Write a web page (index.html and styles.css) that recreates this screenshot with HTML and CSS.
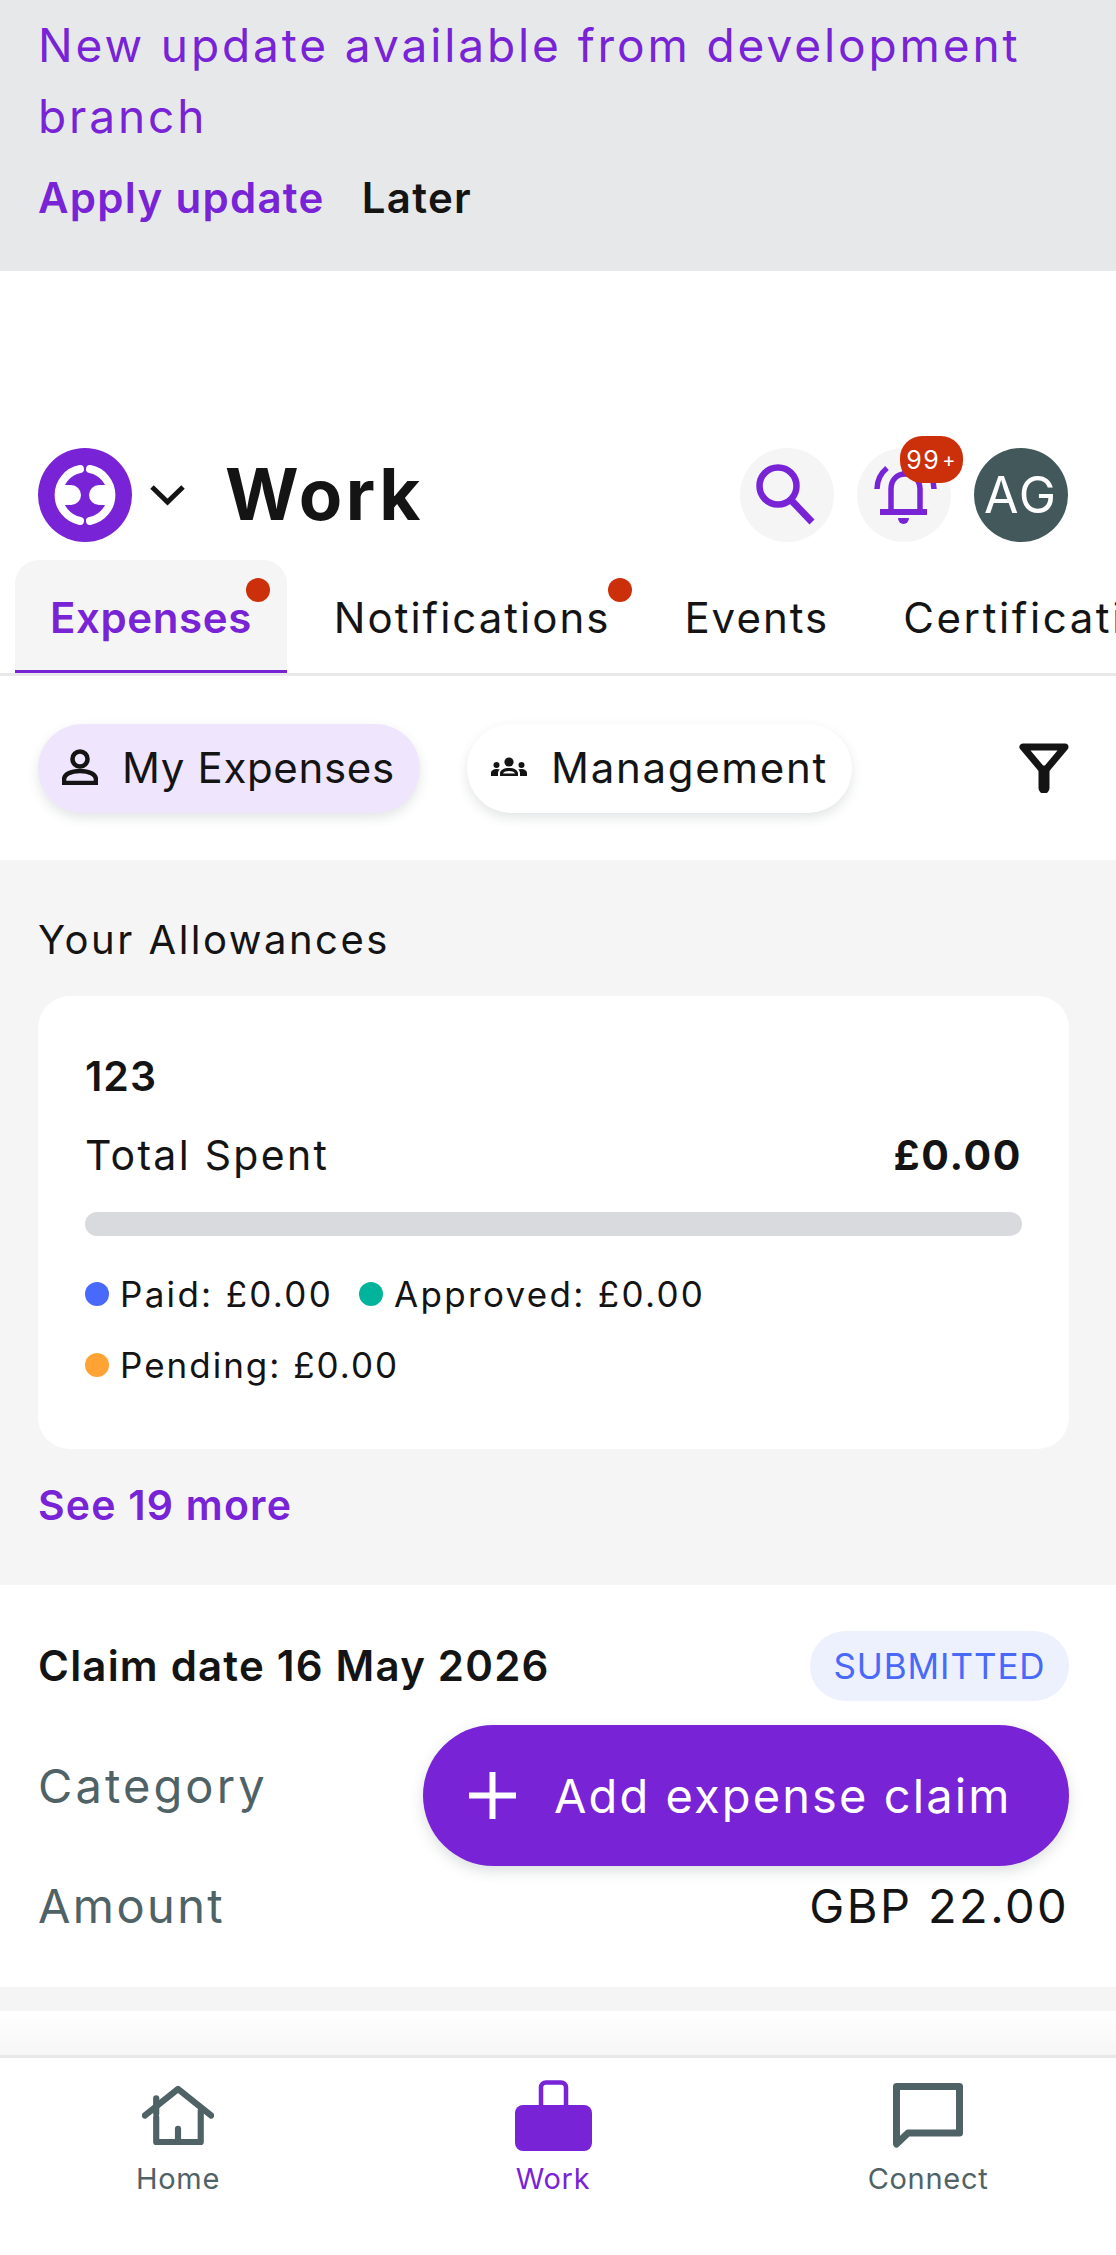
FILE: index.html
```html
<!DOCTYPE html>
<html lang="en">
<head>
<meta charset="utf-8">
<title>Work</title>
<link rel="stylesheet" href="styles.css">
</head>
<body>
<div class="app">
  <section class="banner">
    <p class="banner-text">New update available from development branch</p>
    <div class="banner-actions"><span class="apply">Apply update</span><span class="later">Later</span></div>
  </section>

  <header class="header">
    <svg class="logo" viewBox="0 0 94 94">
      <circle cx="47" cy="47" r="47" fill="#7823d6"/>
      <g fill="none" stroke="#fff" stroke-linecap="round" stroke-width="8">
        <path d="M42 21A26.500 26.500 0 0 0 42 73"/>
        <path d="M52 21A26.500 26.500 0 0 1 52 73"/>
      </g>
      <path d="M20 37H33a10 10 0 0 1 0 20H20Z" fill="#fff"/>
      <path d="M74 37H61a10 10 0 0 0 0 20H74Z" fill="#fff"/>
    </svg>
    <svg class="chevron" viewBox="0 0 35 22"><path d="M2 3L17.500 18L33 3" fill="none" stroke="#141414" stroke-width="5"/></svg>
    <h1 class="title">Work</h1>
    <div class="header-actions">
      <div class="round grey">
        <svg viewBox="0 0 94 94" class="round-icon"><circle cx="38" cy="38" r="18.500" fill="none" stroke="#7823d6" stroke-width="6.500"/><path d="M51 52L72 74" stroke="#7823d6" stroke-width="7" fill="none"/></svg>
      </div>
      <div class="round grey">
        <svg viewBox="0 0 94 94" class="round-icon">
          <g fill="none" stroke="#7823d6" stroke-width="5.500">
            <path d="M34 62V41C34 32 40 26 48 26S63 32 63 41V62"/>
            <path d="M48 27V18"/>
            <path d="M30 20C24 25 20 32 20 41"/>
            <path d="M67 20C73 25 77 32 77 41"/>
          </g>
          <rect x="23" y="61" width="47" height="6" fill="#7823d6"/>
          <path d="M41 70H52A5.500 6 0 0 1 41 70Z" fill="#7823d6"/>
        </svg>
        <span class="count">99<small class="count-plus">+</small></span>
      </div>
      <div class="round avatar">AG</div>
    </div>
  </header>

  <nav class="tabs">
    <div class="tab active">Expenses<span class="dot"></span></div>
    <div class="tab">Notifications<span class="dot"></span></div>
    <div class="tab">Events</div>
    <div class="tab">Certifications</div>
  </nav>

  <div class="filters">
    <div class="chip chip-on">
      <svg class="chip-icon" viewBox="0 0 36 36"><circle cx="18" cy="10" r="7.500" fill="none" stroke="#141414" stroke-width="4.500"/><path d="M2 34V31C2 25 9 22 18 22S34 25 34 31V34Z" fill="none" stroke="#141414" stroke-width="4.500"/></svg>
      <span>My Expenses</span>
    </div>
    <div class="chip chip-off">
      <svg class="chip-icon" viewBox="0 0 36 36">
        <g fill="#141414">
          <circle cx="18" cy="13" r="4.600"/><circle cx="5.500" cy="16" r="3"/><circle cx="30.500" cy="16" r="3"/>
          <path d="M0 27V24C0 21.500 3 20 6 20C7 20 8 20.200 8.800 20.500C7.600 21.600 7 22.900 7 24.300V27Z"/>
          <path d="M36 27V24C36 21.500 33 20 30 20C29 20 28 20.200 27.200 20.500C28.400 21.600 29 22.900 29 24.300V27Z"/>
          <path d="M9 27V24.500C9 21 13 19 18 19S27 21 27 24.500V27ZM12 24.500H24C23 22.700 21 22 18 22S13 22.700 12 24.500Z" fill-rule="evenodd"/>
        </g>
      </svg>
      <span>Management</span>
    </div>
    <svg class="filter" viewBox="0 0 50 50"><path d="M4 4H46L25 29Z" fill="none" stroke="#141414" stroke-width="7" stroke-linejoin="round"/><path d="M25 28V45" stroke="#141414" stroke-width="11" stroke-linecap="round"/></svg>
  </div>

  <main class="content">
    <section class="allowances">
      <h2 class="section-title">Your Allowances</h2>
      <div class="card">
        <div class="card-name">123</div>
        <div class="spent"><span>Total Spent</span><strong>£0.00</strong></div>
        <div class="bar"></div>
        <div class="legend">
          <span class="item"><i class="swatch blue"></i>Paid: £0.00</span>
          <span class="item"><i class="swatch green"></i>Approved: £0.00</span>
          <span class="item"><i class="swatch orange"></i>Pending: £0.00</span>
        </div>
      </div>
      <a class="more">See 19 more</a>
    </section>

    <section class="claim">
      <div class="claim-head"><strong>Claim date 16 May 2026</strong><span class="status">SUBMITTED</span></div>
      <div class="row"><span class="label">Category</span></div>
      <div class="row"><span class="label">Amount</span><span class="value">GBP 22.00</span></div>
    </section>
    <div class="divider"></div>
    <div class="next"></div>
  </main>

  <button class="fab">
    <svg class="plus" viewBox="0 0 47 47"><path d="M23.500 0V47M0 23.500H47" stroke="#fff" stroke-width="6"/></svg>
    <span>Add expense claim</span>
  </button>

  <footer class="bottom">
    <div class="nav-item nav-home">
      <div class="nav-icon">
        <svg class="i-home" viewBox="0 0 76 64"><g fill="none" stroke="#4f6266" stroke-width="6.500" stroke-linecap="round" stroke-linejoin="round"><path d="M3 32L38 4L73 32"/><path d="M15 34V60H62V27"/><path d="M15 14V30"/><path d="M38 46V60"/></g></svg>
      </div>
      <span class="nav-label">Home</span>
    </div>
    <div class="nav-item nav-on">
      <div class="nav-icon">
        <svg class="i-work" viewBox="0 0 77 71"><rect x="26" y="2.500" width="25" height="30" rx="5" fill="none" stroke="#7823d6" stroke-width="4.500"/><rect x="0" y="25" width="77" height="46" rx="8" fill="#7823d6"/></svg>
      </div>
      <span class="nav-label">Work</span>
    </div>
    <div class="nav-item nav-connect">
      <div class="nav-icon">
        <svg class="i-connect" viewBox="0 0 70 66"><path d="M3.500 3.500H66.500V50H15L3.500 61Z" fill="none" stroke="#4f6266" stroke-width="7" stroke-linejoin="round"/></svg>
      </div>
      <span class="nav-label">Connect</span>
    </div>
  </footer>
</div>
</body>
</html>
```
FILE: styles.css
```css
* { box-sizing: border-box; }
html, body { margin: 0; padding: 0; background: #fff; }
body { font-family: Inter, "Liberation Sans", sans-serif; color: #141414; }
.app { position: relative; width: 1116px; height: 2255px; overflow: hidden; display: flex; flex-direction: column; background: #fff; }

.banner { height: 271px; background: #e7e8ea; padding: 10px 38px 0; flex: none; }
.banner-text { margin: 0; font-size: 46px; line-height: 71px; color: #7823d6; letter-spacing: 2.9px; }
.banner-actions { display: flex; gap: 37px; margin-top: 17px; font-size: 42px; line-height: 58px; font-weight: 600; letter-spacing: 1.3px; }
.apply { color: #7823d6; }
.later { color: #141414; }

.header { display: flex; align-items: center; height: 94px; margin: 177px 48px 0 38px; flex: none; }
.logo { width: 94px; height: 94px; flex: none; }
.chevron { width: 35px; height: 22px; margin-left: 18px; flex: none; }
.title { margin: 0 0 2px 40px; font-size: 71px; font-weight: 700; line-height: 92px; letter-spacing: 3.500px; }
.header-actions { margin-left: auto; display: flex; gap: 23px; }
.round { position: relative; width: 94px; height: 94px; border-radius: 50%; display: flex; align-items: center; justify-content: center; }
.grey { background: #f5f5f5; }
.round-icon { width: 94px; height: 94px; display: block; }
.avatar { background: #43585b; color: #fff; font-size: 50px; letter-spacing: 2px; }
.count { position: absolute; left: 43px; top: -12px; width: 63px; height: 47px; border-radius: 22px; background: #cb300b; color: #fff; font-size: 25px; letter-spacing: 1.500px; display: flex; align-items: center; justify-content: center; }
.count-plus { font-size: 20px; margin-left: 2px; }

.tabs { display: flex; height: 116px; margin-top: 18px; padding-left: 15px; border-bottom: 3px solid #e8e8e8; overflow: hidden; flex: none; }
.tab { position: relative; height: 113px; padding: 33px 37px 0; font-size: 42px; line-height: 50px; letter-spacing: 2px; white-space: nowrap; flex: none; }
.tab:last-child { letter-spacing: 2.600px; }
.tab.active { margin-right: 10px; padding: 33px 35px 0; background: #f5f5f5; color: #7823d6; font-weight: 600; border-radius: 24px 24px 0 0; border-bottom: 3px solid #7823d6; letter-spacing: .6px; }
.dot { position: absolute; right: 15px; top: 18px; width: 24px; height: 24px; border-radius: 50%; background: #cb300b; }
.active .dot { right: 17px; }

.filters { display: flex; align-items: center; height: 184px; padding: 0 47px 0 38px; flex: none; }
.chip { display: flex; align-items: center; height: 89px; padding-bottom: 2px; border-radius: 45px; font-size: 42px; box-shadow: 0 5px 12px rgba(60, 70, 80, .14); }
.chip-on { width: 382px; padding-left: 24px; background: #efe6fd; gap: 24px; letter-spacing: .65px; }
.chip-off { width: 385px; padding-left: 24px; margin-left: 47px; background: #fff; gap: 24px; letter-spacing: 1.700px; }
.chip-icon { width: 36px; height: 36px; flex: none; }
.filter { width: 50px; height: 50px; margin-left: auto; }

.content { flex: 1; min-height: 0; overflow: hidden; display: flex; flex-direction: column; }
.allowances { height: 725px; background: #f5f5f5; padding: 54px 47px 0 38px; flex: none; }
.section-title { margin: 0; font-size: 40px; font-weight: 400; line-height: 52px; letter-spacing: 2.500px; }
.card { height: 453px; margin-top: 30px; background: #fff; border-radius: 32px; padding: 56px 47px 0; }
.card-name { font-size: 41px; font-weight: 600; line-height: 48px; letter-spacing: 1px; }
.spent { display: flex; justify-content: space-between; margin-top: 31px; font-size: 41px; line-height: 48px; letter-spacing: 2.300px; }
.spent strong { font-weight: 700; letter-spacing: 1.600px; }
.bar { height: 24px; margin-top: 33px; background: #d9dade; border-radius: 12px; }
.legend { display: flex; flex-wrap: wrap; column-gap: 26px; row-gap: 27px; margin-top: 36px; font-size: 35px; line-height: 44px; letter-spacing: 2.300px; }
.item { display: flex; align-items: center; gap: 11px; }
.item:last-child { letter-spacing: 2px; }
.swatch { width: 24px; height: 24px; border-radius: 50%; }
.blue { background: #4869fa; }
.green { background: #00b39b; }
.orange { background: #ffa334; }
.more { display: block; margin-top: 31px; color: #7823d6; font-size: 41px; font-weight: 600; line-height: 50px; letter-spacing: 1.200px; }

.claim { height: 402px; padding: 46px 47px 0 38px; flex: none; }
.claim-head { display: flex; justify-content: space-between; align-items: center; height: 70px; font-size: 42px; }
.claim-head strong { font-weight: 600; letter-spacing: 1.200px; padding-bottom: 2px; }
.status { height: 70px; width: 259px; border-radius: 35px; background: #edf0fd; color: #4869fa; font-size: 35px; letter-spacing: .9px; display: flex; align-items: center; justify-content: center; }
.row { display: flex; justify-content: space-between; align-items: center; height: 120px; font-size: 47px; letter-spacing: 2.400px; }
.row:nth-child(2) { margin-top: 24px; letter-spacing: 3.100px; }
.label { color: #4f6266; }
.value { color: #141414; }
.divider { height: 24px; background: #f5f5f5; flex: none; }
.next { flex: 1; background: linear-gradient(#fff, #f6f6f6); }

.fab { position: absolute; left: 423px; top: 1725px; width: 646px; height: 141px; border: 0; border-radius: 71px; background: #7823d6; color: #fff; font: inherit; font-size: 47px; letter-spacing: 2.100px; display: flex; align-items: center; padding: 0 0 0 46px; gap: 38px; box-shadow: 0 5px 14px rgba(60, 70, 80, .18); }
.plus { width: 47px; height: 47px; flex: none; }

.bottom { display: grid; grid-template-columns: repeat(3, 372px); height: 200px; border-top: 3px solid #e8e8e8; background: #fff; flex: none; }
.nav-item { display: flex; flex-direction: column; align-items: center; padding-top: 22px; color: #4f6266; position: relative; }
.nav-home { left: -8px; }
.nav-on { color: #7823d6; left: -5px; }
.nav-connect { left: -2px; }
.nav-icon { height: 71px; display: flex; align-items: center; justify-content: center; }
.i-home { width: 72px; height: 61px; }
.i-work { width: 77px; height: 71px; }
.i-connect { width: 70px; height: 66px; }
.nav-label { font-size: 29px; line-height: 36px; margin-top: 10px; letter-spacing: .7px; }
```
